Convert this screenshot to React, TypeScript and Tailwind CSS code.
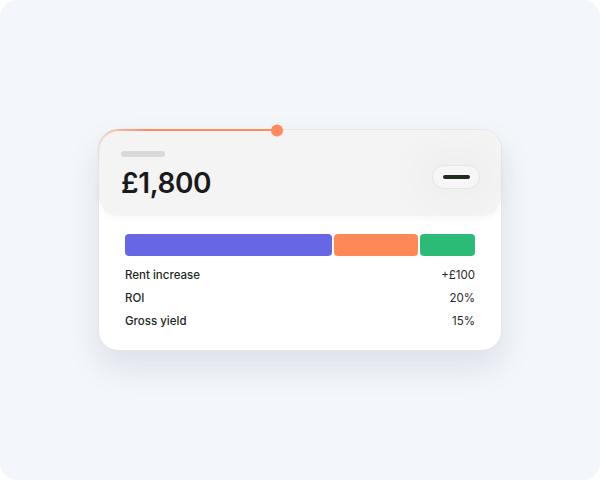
const rows = [
  { label: "Rent increase", value: "+£100" },
  { label: "ROI", value: "20%" },
  { label: "Gross yield", value: "15%" },
];

export default function App() {
  return (
    <div className="h-[480px] w-[600px] bg-white font-['Inter',sans-serif]">
      <div className="flex h-full w-full items-center justify-center rounded-[18px] bg-[#f3f6fb]">
        <div className="relative w-[404px] rounded-[20px] border border-[#e6e6e6] bg-white shadow-[0_16px_32px_rgba(30,40,70,0.10)]">
          {/* progress line over the top edge */}
          <svg
            className="absolute -left-px top-[-9px] z-10"
            width="190"
            height="48"
            viewBox="0 0 190 48"
            fill="none"
          >
            <defs>
              <linearGradient id="fade" x1="0" y1="38" x2="50" y2="8" gradientUnits="userSpaceOnUse">
                <stop offset="0" stopColor="#ff8a5b" stopOpacity="0" />
                <stop offset="1" stopColor="#ff8a5b" />
              </linearGradient>
            </defs>
            <path d="M1 44 V29 A20 20 0 0 1 21 9 H179" stroke="url(#fade)" strokeWidth="2" />
            <circle cx="179" cy="9.5" r="6" fill="#ff8a5b" />
          </svg>

          {/* header */}
          <div className="flex h-[86px] items-center justify-between rounded-[20px] bg-[#f4f4f4] pl-[22px] pr-[21px] shadow-[0_2px_6px_rgba(0,0,0,0.03)]">
            <div className="flex flex-col pt-[4px]">
              <div className="h-[6px] w-[44px] rounded-full bg-[#d9d9d9]" />
              <div className="mt-[9px] text-[28px] font-semibold leading-[34px] tracking-[-0.4px] text-[#1a1a1a]">
                £1,800
              </div>
            </div>
            <div className="mt-[8px] flex h-[24px] w-[48px] items-center justify-center rounded-full border border-[#e4e4e4] bg-[#f6f6f6] shadow-[0_0_40px_20px_rgba(0,0,0,0.025)]">
              <div className="h-[4px] w-[27px] rounded-full bg-[#1f2d1f]" />
            </div>
          </div>

          {/* body */}
          <div className="px-[26px] pb-[17px] pt-[18px]">
            <div className="flex h-[22px] gap-[2px]">
              <div className="w-[207px] rounded-[4px] bg-[#6767e5]" />
              <div className="w-[84px] rounded-[4px] bg-[#ff8858]" />
              <div className="flex-1 rounded-[4px] bg-[#2bbb77]" />
            </div>
            <div className="mt-[8px] flex flex-col">
              {rows.map((r) => (
                <div key={r.label} className="flex h-[23px] items-center justify-between text-[11.5px]">
                  <span className="font-medium text-[#1c281c]">{r.label}</span>
                  <span className="text-[#2a2a2a]">{r.value}</span>
                </div>
              ))}
            </div>
          </div>
        </div>
      </div>
    </div>
  );
}
